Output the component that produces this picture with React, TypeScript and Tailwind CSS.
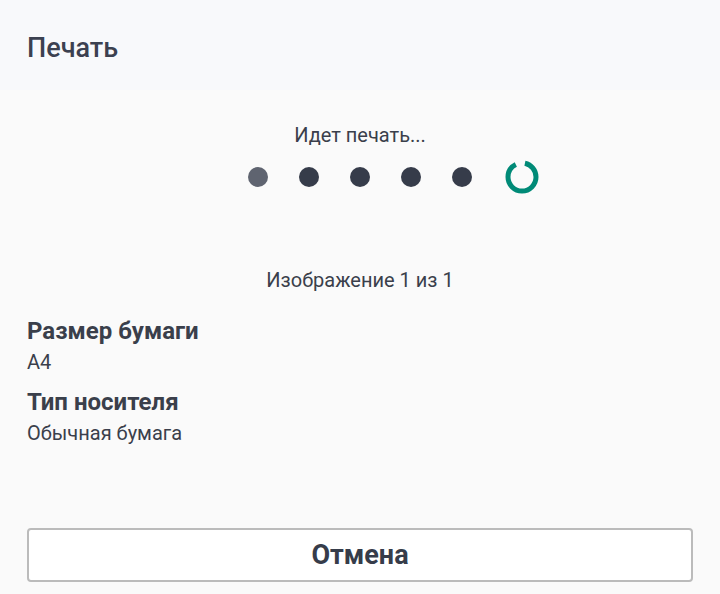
export default function App() {
  const dots = ["bg-[#5f6470]", "bg-[#363c4a]", "bg-[#363c4a]", "bg-[#363c4a]", "bg-[#363c4a]"];

  return (
    <div className="flex h-[594px] w-[720px] flex-col bg-[#fafafa] font-['Roboto',sans-serif] text-[#3a3f4b]">
      {/* Header */}
      <div className="flex h-[90px] items-center bg-[#f8f9fb] px-[27px] pt-[6px]">
        <h1 className="text-[27px] font-medium leading-[34px] text-[#3c4150]">Печать</h1>
      </div>

      {/* Progress */}
      <div className="flex flex-col items-center pt-[33px]">
        <div className="text-[20px] leading-[24px]">Идет печать...</div>
        <div className="mt-[12px] flex items-center gap-[31px] pl-[67px]">
          {dots.map((c, i) => (
            <div key={i} className={`h-[20px] w-[20px] rounded-full ${c}`} />
          ))}
          <svg width="36" height="36" viewBox="0 0 36 36" className="ml-[1px]">
            <circle
              cx="18"
              cy="18"
              r="14"
              fill="none"
              stroke="#008a77"
              strokeWidth="5"
              strokeDasharray="78 10"
              strokeDashoffset="-3"
              transform="rotate(-90 18 18)"
            />
          </svg>
        </div>
        <div className="mt-[73px] text-[20px] leading-[24px]">Изображение 1 из 1</div>
      </div>

      {/* Details */}
      <div className="flex flex-col px-[27px] pt-[24px]">
        <div className="text-[24px] font-bold leading-[30px]">Размер бумаги</div>
        <div className="mt-[4px] text-[20px] leading-[24px]">A4</div>
        <div className="mt-[13px] text-[24px] font-bold leading-[30px]">Тип носителя</div>
        <div className="mt-[4px] text-[20px] leading-[24px]">Обычная бумага</div>
      </div>

      {/* Cancel */}
      <div className="mt-auto px-[27px] pb-[12px]">
        <button className="flex h-[54px] w-full items-center justify-center rounded-[4px] border-2 border-[#bbbbbb] bg-white text-[27px] font-bold text-[#363c4a]">
          Отмена
        </button>
      </div>
    </div>
  );
}
